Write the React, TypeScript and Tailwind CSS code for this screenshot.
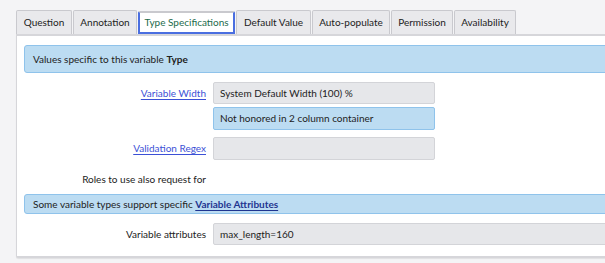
import React from 'react';

const tabs = [
  { label: 'Question', w: 'w-[56px]' },
  { label: 'Annotation', w: 'w-[64px]' },
  { label: 'Type Specifications', w: 'w-[97px]', active: true },
  { label: 'Default Value', w: 'w-[75px]' },
  { label: 'Auto-populate', w: 'w-[78px]' },
  { label: 'Permission', w: 'w-[62px]' },
  { label: 'Availability', w: 'w-[62px]' },
];

const App: React.FC = () => {
  return (
    <div className="w-[605px] h-[263px] overflow-hidden bg-[#f4f4f6] pl-4 pt-[10px] text-[10px] text-[#222] font-['Lato','Noto_Sans',sans-serif]">
      {/* Tabs */}
      <div className="flex gap-px h-6 whitespace-nowrap">
        {tabs.map((t) =>
          t.active ? (
            <div
              key={t.label}
              className={`${t.w} h-[23px] mt-px flex items-center justify-center bg-white border-2 border-[#4a6ee0] border-t-[#c9c9ce] text-[#1d6b4c] rounded-t-[2px]`}
            >
              {t.label}
            </div>
          ) : (
            <div
              key={t.label}
              className={`${t.w} h-6 flex items-center justify-center bg-[#e9e9ec] border border-b-0 border-[#c9c9ce] rounded-t-[2px]`}
            >
              {t.label}
            </div>
          )
        )}
      </div>

      {/* Panel */}
      <div className="w-[620px] h-[224px] bg-white border-t-2 border-l border-b-2 border-[#d6d6da] rounded-bl-[2px] shadow-[0_1px_1px_rgba(0,0,0,0.08)] pl-[7px] pt-[9px]">
        <div className="h-[28px] flex items-center pl-2 bg-[#bcdcf2] border border-[#8fc3eb] rounded-l-[3px]">
          Values specific to this variable&nbsp;<b>Type</b>
        </div>

        <div className="flex mt-[9px]">
          <div className="w-[183px] pr-[1px] text-right h-[22px] leading-[22px]">
            <a className="text-[#3b50d6] underline underline-offset-2">Variable Width</a>
          </div>
          <div className="ml-[6px] flex flex-col gap-[3px]">
            <div className="w-[222px] h-[22px] flex items-center pl-[6px] bg-[#e6e7ea] border border-[#d3d4d8] rounded-[2px]">
              System Default Width (100) %
            </div>
            <div className="w-[222px] h-[23px] flex items-center pl-[6px] bg-[#bcdcf2] border border-[#8fc3eb] rounded-[2px]">
              Not honored in 2 column container
            </div>
          </div>
        </div>

        <div className="flex mt-[7px]">
          <div className="w-[183px] pr-[1px] text-right h-[23px] leading-[23px]">
            <a className="text-[#3b50d6] underline underline-offset-2">Validation Regex</a>
          </div>
          <div className="ml-[6px] w-[222px] h-[23px] bg-[#e6e7ea] border border-[#d3d4d8] rounded-[2px]" />
        </div>

        <div className="flex mt-[9px] h-[20px] items-center">
          <div className="w-[183px] pr-[1px] text-right">Roles to use also request for</div>
        </div>

        <div className="mt-[5px] h-[20px] flex items-center pl-2 bg-[#bcdcf2] border border-[#8fc3eb] rounded-l-[3px]">
          Some variable types support specific&nbsp;
          <a className="font-bold text-[#1f3590] underline underline-offset-2">Variable Attributes</a>
        </div>

        <div className="flex mt-[9px]">
          <div className="w-[183px] pr-[1px] text-right h-[22px] leading-[22px]">Variable attributes</div>
          <div className="ml-[6px] flex-1 h-[22px] flex items-center pl-[6px] bg-[#e6e7ea] border border-[#d3d4d8] rounded-[2px]">
            max_length=160
          </div>
        </div>
      </div>
    </div>
  );
};

export default App;
